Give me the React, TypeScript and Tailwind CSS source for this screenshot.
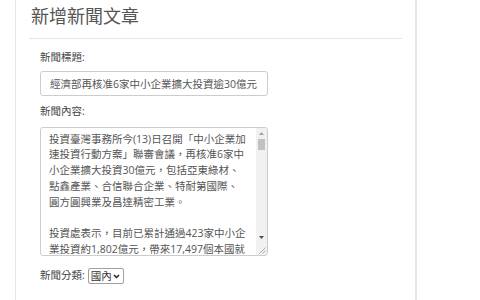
import React from "react";

const content = [
  "投資臺灣事務所今(13)日召開「中小企業加速投資行動方案」聯審會議，再核准6家中小企業擴大投資30億元，包括亞東綠材、點鑫產業、合信聯合企業、特耐第國際、圓方圓興業及昌達精密工業。",
  "投資處表示，目前已累計通過423家中小企業投資約1,802億元，帶來17,497個本國就業機會，顯示中小企業對於臺灣投資環境深具信心，投資動能持續增溫。",
  "亞東綠材為國內專業生產建築用綠色材料之廠商，此次投資將於桃園新建廠房，導入智慧化生產設備，提升產能並降低能源消耗，預計創造40個本國就業機會。",
  "點鑫產業主要生產各式精密五金零組件，產品廣泛應用於汽車、機械及電子產業，本次投資將擴充生產線並導入自動化檢測設備，強化產品品質與國際競爭力。",
].join("\n\n");

function ScrollBar() {
  return (
    <div className="flex w-[11px] shrink-0 flex-col bg-[#f1f1f1]">
      <div className="flex h-[11px] items-center justify-center">
        <svg width="5" height="3" viewBox="0 0 5 3">
          <path d="M2.5 0L5 3H0z" fill="#a3a3a3" />
        </svg>
      </div>
      <div className="mx-[2px] h-[11px] bg-[#c1c1c1]" />
      <div className="flex-1" />
      <div className="flex h-[11px] items-center justify-center">
        <svg width="5" height="3" viewBox="0 0 5 3">
          <path d="M0 0H5L2.5 3z" fill="#505050" />
        </svg>
      </div>
      <div className="flex h-[12px] items-end justify-end">
        <svg width="8" height="8" viewBox="0 0 8 8" className="mb-px mr-px">
          <path d="M7.5 1.5L1.5 7.5M7.5 4.5L4.5 7.5" stroke="#9a9a9a" strokeWidth="0.8" />
        </svg>
      </div>
    </div>
  );
}

export default function App() {
  return (
    <div className="min-h-[300px] bg-white font-['Open_Sans','Noto_Sans_CJK_TC',sans-serif]">
      <div className="ml-[15px] w-[402px] min-h-[300px] border-l border-r-2 border-[#e8e8e8] px-[14px] pt-[6px]">
        <h2 className="pl-px text-[18px] leading-[20px] font-normal text-[#555]">新增新聞文章</h2>
        <hr className="mt-[12px] -mx-px border-t border-[#e6e6e6]" />
        <div className="pl-[10px]">
          <label className="mt-[11px] block text-[10.5px] leading-[15.75px] text-[#444]">新聞標題:</label>
          <input
            className="mt-[5px] block h-[25px] w-[228px] rounded-[3px] border border-[#ccc] px-[9px] text-[10.5px] text-[#555] outline-none"
            defaultValue="經濟部再核准6家中小企業擴大投資逾30億元"
          />
          <label className="mt-[8px] block text-[10.5px] leading-[15.75px] text-[#444]">新聞內容:</label>
          <div className="mt-[7px] flex h-[129px] w-[228px] overflow-hidden rounded-[3px] border border-[#ccc]">
            <textarea
              className="block h-full min-w-0 flex-1 resize-none overflow-hidden border-0 bg-transparent pl-[8px] pr-[10px] py-[4px] text-[10.5px] leading-[15.75px] text-[#555] outline-none"
              defaultValue={content}
            />
            <ScrollBar />
          </div>
          <div className="mt-[12px] flex items-center gap-[3px]">
            <label className="text-[10.5px] leading-[15.75px] text-[#444]">新聞分類:</label>
            <div className="relative">
              <select
                className="block h-[16px] w-[36px] appearance-none rounded-[2px] border border-[#a0a0a0] bg-white pl-[2px] text-[10.5px] leading-[14px] text-[#333] outline-none"
                defaultValue="國內"
              >
                <option>國內</option>
                <option>國際</option>
                <option>財經</option>
              </select>
              <svg
                width="7"
                height="5"
                viewBox="0 0 7 5"
                className="pointer-events-none absolute right-[4px] top-[6px]"
              >
                <path d="M1 1l2.5 2.5L6 1" stroke="#222" strokeWidth="1.5" fill="none" />
              </svg>
            </div>
          </div>
        </div>
      </div>
    </div>
  );
}
